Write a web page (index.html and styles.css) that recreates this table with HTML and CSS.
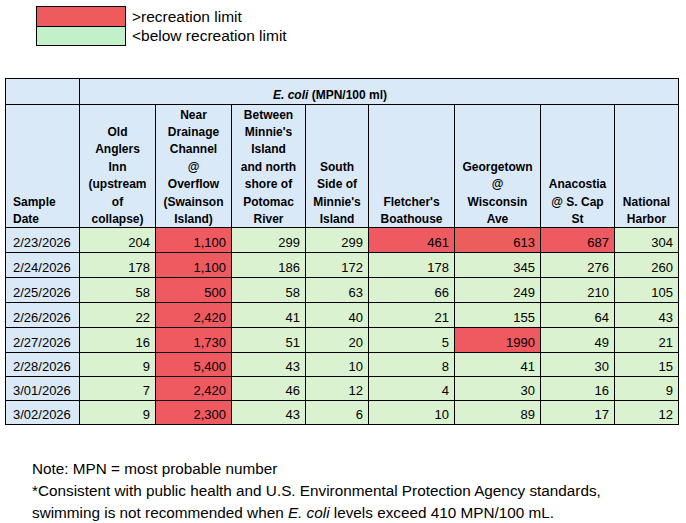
FILE: index.html
```html
<!DOCTYPE html>
<html lang="en">
<head>
<meta charset="utf-8">
<title>E. coli sampling results</title>
<link rel="stylesheet" href="styles.css">
</head>
<body>
<div class="legend">
  <div class="legend-row">
    <span class="swatch swatch-red"></span>
    <span class="legend-label">&gt;recreation limit</span>
  </div>
  <div class="legend-row">
    <span class="swatch swatch-green"></span>
    <span class="legend-label">&lt;below recreation limit</span>
  </div>
</div>

<div class="sheet">
  <div class="cell head"></div>
  <div class="cell head title"><span><i>E. coli</i> (MPN/100 ml)</span></div>

  <div class="cell head colhead left"><span>Sample<br>Date</span></div>
  <div class="cell head colhead"><span>Old<br>Anglers<br>Inn<br>(upstream<br>of<br>collapse)</span></div>
  <div class="cell head colhead"><span>Near<br>Drainage<br>Channel<br>@<br>Overflow<br>(Swainson<br>Island)</span></div>
  <div class="cell head colhead"><span>Between<br>Minnie's<br>Island<br>and north<br>shore of<br>Potomac<br>River</span></div>
  <div class="cell head colhead"><span>South<br>Side of<br>Minnie's<br>Island</span></div>
  <div class="cell head colhead"><span>Fletcher's<br>Boathouse</span></div>
  <div class="cell head colhead"><span>Georgetown<br>@<br>Wisconsin<br>Ave</span></div>
  <div class="cell head colhead"><span>Anacostia<br>@ S. Cap<br>St</span></div>
  <div class="cell head colhead"><span>National<br>Harbor</span></div>

  <div class="cell date">2/23/2026</div>
  <div class="cell ok">204</div><div class="cell hi">1,100</div><div class="cell ok">299</div><div class="cell ok">299</div><div class="cell hi">461</div><div class="cell hi alt">613</div><div class="cell hi">687</div><div class="cell ok">304</div>

  <div class="cell date">2/24/2026</div>
  <div class="cell ok">178</div><div class="cell hi">1,100</div><div class="cell ok">186</div><div class="cell ok">172</div><div class="cell ok">178</div><div class="cell ok">345</div><div class="cell ok">276</div><div class="cell ok">260</div>

  <div class="cell date">2/25/2026</div>
  <div class="cell ok">58</div><div class="cell hi">500</div><div class="cell ok">58</div><div class="cell ok">63</div><div class="cell ok">66</div><div class="cell ok">249</div><div class="cell ok">210</div><div class="cell ok">105</div>

  <div class="cell date">2/26/2026</div>
  <div class="cell ok">22</div><div class="cell hi">2,420</div><div class="cell ok">41</div><div class="cell ok">40</div><div class="cell ok">21</div><div class="cell ok">155</div><div class="cell ok">64</div><div class="cell ok">43</div>

  <div class="cell date">2/27/2026</div>
  <div class="cell ok">16</div><div class="cell hi">1,730</div><div class="cell ok">51</div><div class="cell ok">20</div><div class="cell ok">5</div><div class="cell hi">1990</div><div class="cell ok">49</div><div class="cell ok">21</div>

  <div class="cell date">2/28/2026</div>
  <div class="cell ok">9</div><div class="cell hi">5,400</div><div class="cell ok">43</div><div class="cell ok">10</div><div class="cell ok">8</div><div class="cell ok">41</div><div class="cell ok">30</div><div class="cell ok">15</div>

  <div class="cell date">3/01/2026</div>
  <div class="cell ok">7</div><div class="cell hi">2,420</div><div class="cell ok">46</div><div class="cell ok">12</div><div class="cell ok">4</div><div class="cell ok">30</div><div class="cell ok">16</div><div class="cell ok">9</div>

  <div class="cell date">3/02/2026</div>
  <div class="cell ok">9</div><div class="cell hi">2,300</div><div class="cell ok">43</div><div class="cell ok">6</div><div class="cell ok">10</div><div class="cell ok">89</div><div class="cell ok">17</div><div class="cell ok">12</div>
</div>

<div class="notes">
  <p>Note: MPN = most probable number</p>
  <p>*Consistent with public health and U.S. Environmental Protection Agency standards,</p>
  <p>swimming is not recommended when <i>E. coli</i> levels exceed 410 MPN/100 mL.</p>
</div>
</body>
</html>
```

FILE: styles.css
```css
html, body {
  margin: 0;
  padding: 0;
  background: #ffffff;
  color: #000000;
  font-family: "Liberation Sans", Arial, sans-serif;
}

body {
  padding-top: 6px;
}

.legend {
  margin-left: 36px;
  display: flex;
  flex-direction: column;
}

.legend-row {
  display: flex;
  align-items: center;
}

.legend-row + .legend-row {
  margin-top: -1px;
}

.swatch {
  display: block;
  width: 88px;
  border: 1px solid #000;
}

.swatch-red {
  height: 19px;
  background: #ee5b5d;
}

.swatch-green {
  height: 18px;
  background: #c2f0c9;
}

.legend-label {
  margin-left: 6px;
  font-size: 15.5px;
  line-height: 18px;
}

.sheet {
  display: grid;
  grid-template-columns: 73px 75px 75px 73px 62px 85px 85px 73px 63px;
  grid-template-rows: 25px 122px repeat(5, 24px) repeat(3, 23px);
  gap: 1px;
  padding: 1px;
  background: #000;
  width: max-content;
  margin: 32px 0 0 5px;
}

.cell {
  display: flex;
  align-items: flex-end;
  justify-content: flex-end;
  font-size: 13px;
  line-height: 15px;
  padding: 0 5px 2px 0;
  white-space: nowrap;
}

.head {
  background: #dae9f8;
  font-weight: bold;
  font-size: 12px;
}

.title {
  grid-column: 2 / span 8;
  justify-content: flex-start;
  padding: 0 0 1px 193px;
}

.colhead {
  justify-content: center;
  text-align: center;
  line-height: 17.4px;
  padding: 0;
}

.colhead span {
  margin-bottom: -1.5px;
}

.colhead.left {
  justify-content: flex-start;
  text-align: left;
  padding-left: 7px;
}

.date {
  background: #dae9f8;
  justify-content: flex-start;
  padding-left: 7px;
}

.ok {
  background: #daf2d0;
}

.hi {
  background: #ee5a5f;
}

.hi.alt {
  background: #ec5e5b;
}

.notes {
  margin: 33px 0 0 32px;
  font-size: 15.3px;
  line-height: 22px;
}

.notes p {
  margin: 0;
  white-space: nowrap;
}
```
